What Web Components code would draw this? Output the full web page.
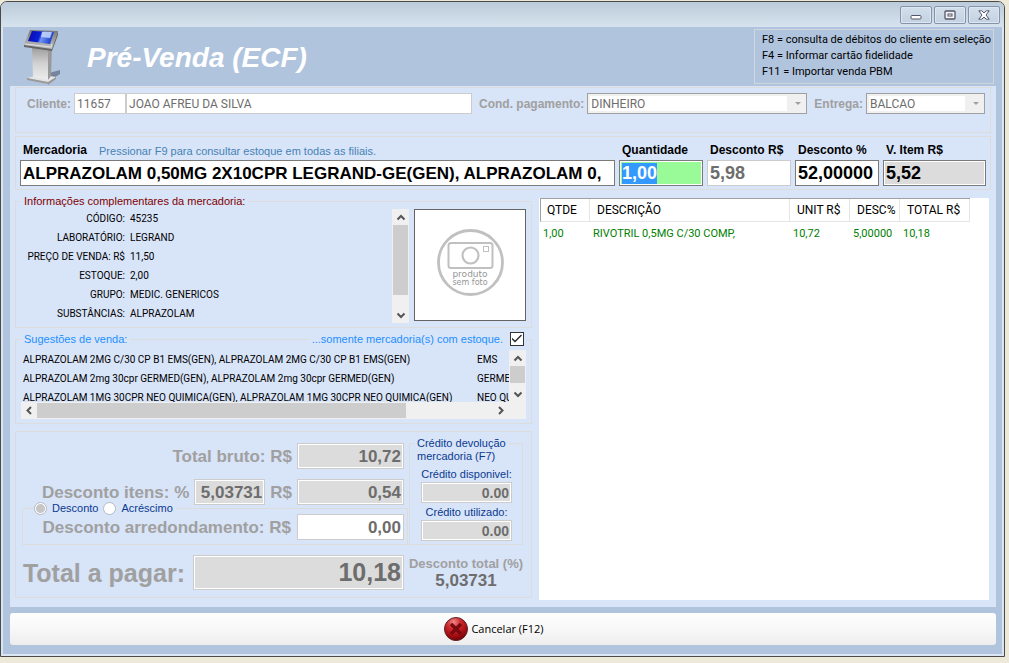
<!DOCTYPE html>
<html lang="pt-BR">
<head>
<meta charset="utf-8">
<title>Pré-Venda (ECF)</title>
<style>
  html, body { margin: 0; }
  body {
    box-sizing: border-box;
    min-height: 100vh;
    padding: 1px 4px 6px 0;
    display: flex;
    background: #ece9d8;
    color: #000;
    font: 11px/14px "Liberation Sans", Arial, sans-serif;
    --panel: #d8e4f8;
    --frame: #b0c4de;
    --line: #dcdcdc;
    --muted: #a0a0a0;
    --bold: "Liberation Sans", Arial, sans-serif;
  }
  pre-sale-app { flex: 1; }
</style>
</head>
<body>
<pre-sale-app></pre-sale-app>

<script>
const define = (name, html, setup) => {
  const template = document.createElement('template');
  template.innerHTML = html;
  customElements.define(name, class extends HTMLElement {
    constructor() {
      super();
      this.attachShadow({ mode: 'open' }).append(template.content.cloneNode(true));
    }
    connectedCallback() { if (setup) setup(this.shadowRoot, this); }
  });
};

/* Rules shared by the text boxes of every form */
const fieldCss = `
  * { box-sizing: border-box; }
  input[type=text] {
    display: block; min-width: 0; width: 100%; height: 26px; margin: 0; padding: 1px 2px 0;
    border: 1px solid #7a7a7a; border-radius: 0; outline: 0; background: #fff; color: #000;
    font: bold 17px var(--bold); box-shadow: inset 0 0 0 1px #fff;
  }
  input[type=text].off { border-color: #ccc; color: #6d6d6d; opacity: 1; }
  input[type=text].gray { background: #dcdcdc; }
  input[type=text].right { text-align: right; }
  fieldset { min-width: 0; margin: 0; border: 1px solid var(--line); }
  legend { padding: 0 3px; }
`;

define('window-frame', `
  <style>
    :host { display: flex; flex-direction: column; box-sizing: border-box; border: 1px solid #4a4a4a;
      border-radius: 7px 7px 0 0; padding: 0 2px 2px; background: #d9e5f1; overflow: hidden; }
    header { display: flex; justify-content: flex-end; align-items: center; gap: 2px; height: 25px;
      box-sizing: border-box; margin: 0 -2px; padding: 0 4px 0 0; background: linear-gradient(#bccbd9, #d6e3ef); }
    button { width: 32px; height: 18px; padding: 0; display: grid; place-items: center;
      border: 1px solid #8494ac; border-radius: 2px; background: linear-gradient(#d3dfeb, #c3d2e1);
      box-shadow: inset 0 0 0 1px #dce7f1; }
    .content { flex: 1; display: flex; flex-direction: column; background: var(--frame); padding: 0 6px 9px 7px; }
    svg { display: block; }
  </style>
  <header>
    <button type="button" aria-label="Minimizar"><svg width="12" height="10" viewBox="0 0 12 10"><rect x="1" y="5.500" width="10" height="3.500" rx="1" fill="#fff" stroke="#55556a"/></svg></button>
    <button type="button" aria-label="Maximizar"><svg width="12" height="10" viewBox="0 0 12 10"><rect x="1" y="1" width="10" height="8" rx="1" fill="#f2f2f2" stroke="#55556a" stroke-width="1.300"/><rect x="4" y="4" width="4" height="2" fill="#fff" stroke="#55556a"/></svg></button>
    <button type="button" aria-label="Fechar"><svg width="12" height="10" viewBox="0 0 12 10"><path d="M.8.8h3L6 3 8.200.8h3L8 5l3.200 4.200h-3L6 7 3.800 9.200h-3L4 5z" fill="#fff" stroke="#55556a" stroke-linejoin="round"/></svg></button>
  </header>
  <div class="content"><slot></slot></div>
`);

define('page-header', `
  <style>
    :host { display: flex; align-items: center; height: 59px; }
    svg { flex: none; margin: 0 26px 0 13px; }
    h1 { flex: 1; margin: 0; padding-top: 3px; color: #fff; font: italic bold 28px/34px var(--bold); white-space: nowrap; }
    ul { box-sizing: border-box; flex: 0 0 240px; min-width: 0; margin: 0 2px 0 0; padding: 2px 0 3px 7px; list-style: none;
      border: 1px solid #d0d6de; font-family: Roboto, sans-serif; line-height: 16px; white-space: nowrap; }
  </style>
  <svg width="38" height="57" viewBox="0 0 38 57" aria-hidden="true">
    <defs>
      <linearGradient id="post" x1="0" x2="0" y1="0" y2="1"><stop stop-color="#9b9b9b"/><stop offset=".5" stop-color="#d2d2d2"/><stop offset="1" stop-color="#eee"/></linearGradient>
      <linearGradient id="screen" x1="0" x2="1" y1="0" y2=".2"><stop stop-color="#1a0a90"/><stop offset=".3" stop-color="#0716c8"/><stop offset=".5" stop-color="#0a22d8"/><stop offset=".6" stop-color="#6f93f0"/><stop offset="1" stop-color="#1c40cf"/></linearGradient>
      <linearGradient id="bezel" x1="0" x2="0" y1="0" y2="1"><stop stop-color="#777"/><stop offset="1" stop-color="#c4c4c4"/></linearGradient>
    </defs>
    <path d="M26 45l11-3v4l-8 5z" fill="#5d6b80" opacity=".7"/>
    <path d="M4 50l8-2h15l6 1-8 7z" fill="#e4e4e4"/><path d="M4 50l21 4v2L4 52zM25 54l8-5v2l-8 6z" fill="#999"/>
    <path d="M9 19l19 2-1 31-17-3z" fill="url(#post)"/><path d="M25 21l4-2-1 29-3 4z" fill="#999"/>
    <path d="M7 2l28 1-6 18L1 17z" fill="url(#bezel)"/><path d="M1 17l28 4 6-18v4l-6 16L1 19z" fill="#666"/>
    <path d="M2 16l26 3 1-3" fill="none" stroke="#e0e0e0"/>
    <path d="M9 3l22 1-4 12L5 13z" fill="url(#screen)"/><path d="M19 4l10 0-2 6-9-1z" fill="#c5d6fa" opacity=".85"/>
  </svg>
  <h1>Pré-Venda (ECF)</h1>
  <ul>
    <li>F8 = consulta de débitos do cliente em seleção</li>
    <li>F4 = Informar cartão fidelidade</li>
    <li>F11 = Importar venda PBM</li>
  </ul>
`);

define('customer-form', `
  <style>${fieldCss}
    :host { display: block; box-sizing: border-box; height: 46px; padding: 5px 5px 0 11px; border: 1px solid var(--line); }
    form { display: grid; grid-template-columns: auto 52px minmax(0, 1fr) auto 220px auto 119px; align-items: center; }
    label { color: var(--muted); font: bold 12px/16px var(--bold); white-space: nowrap; padding: 1px 3px 0 7px; }
    label:first-child { padding: 1px 3px 0 0; }
    input[type=text] { height: 21px; font: 12px Roboto, sans-serif; }
    input + input { margin-left: -1px; }
    .combo { position: relative; }
    select { appearance: none; display: block; width: 100%; height: 21px; margin: 0; padding: 0 18px 0 3px;
      border: 1px solid #a0a0a0; border-radius: 0; opacity: 1; color: #6d6d6d; font: 12px Roboto, sans-serif;
      background: linear-gradient(90deg, #fff calc(100% - 19px), #f0f0f0 0); box-shadow: inset 0 0 0 2px #f0f0f0; }
    .combo svg { position: absolute; right: 6px; top: 9px; }
  </style>
  <form>
    <label for="code">Cliente:</label>
    <input id="code" class="off" type="text" value="11657" disabled>
    <input class="off" type="text" value="JOAO AFREU DA SILVA" aria-label="Nome do cliente" disabled>
    <label for="terms">Cond. pagamento:</label>
    <div class="combo"><select id="terms" disabled><option>DINHEIRO</option></select><svg width="6" height="3"><path d="M0 0h6L3 3z" fill="#a0a0a0"/></svg></div>
    <label for="delivery">Entrega:</label>
    <div class="combo"><select id="delivery" disabled><option>BALCAO</option></select><svg width="6" height="3"><path d="M0 0h6L3 3z" fill="#a0a0a0"/></svg></div>
  </form>
`);

define('item-form', `
  <style>${fieldCss}
    :host { display: block; border: 1px solid var(--line); padding: 5px 4px 3px; }
    form { display: grid; grid-template-columns: minmax(0, 1fr) 84px 84px 84px 103px; gap: 2px 4px; }
    .cap { height: 16px; padding-left: 3px; white-space: nowrap; font: bold 12px/16px var(--bold); }
    .first { display: flex; gap: 12px; }
    .hint { padding-top: 2px; color: #4682b4; font-weight: 400; font-size: 11px; line-height: 14px; }
    input[type=text].num { font-size: 18px; }
    #qty { background: #98fb98; }
    #qty::selection { background: #3399ff; color: #fff; }
  </style>
  <form>
    <div class="cap first"><label for="item">Mercadoria</label><span class="hint">Pressionar F9 para consultar estoque em todas as filiais.</span></div>
    <label class="cap" for="qty">Quantidade</label>
    <label class="cap" for="off">Desconto R$</label>
    <label class="cap" for="pct">Desconto %</label>
    <label class="cap" for="unit">V. Item R$</label>
    <input id="item" type="text" value="ALPRAZOLAM 0,50MG 2X10CPR LEGRAND-GE(GEN), ALPRAZOLAM 0,">
    <input id="qty" class="num" type="text" value="1,00">
    <input id="off" class="num off" type="text" value="5,98" disabled>
    <input id="pct" class="num" type="text" value="52,00000">
    <input id="unit" class="num gray" type="text" value="5,52" readonly>
  </form>
`, root => {
  const qty = root.getElementById('qty');
  qty.focus();
  qty.select();
});

/* Classic scroll bar: size of the thumb and of the space after it come from the host's properties */
define('scroll-strip', `
  <style>
    :host { display: flex; flex-direction: column; width: 17px; background: #f0f0f0; }
    :host([horizontal]) { flex-direction: row; width: auto; height: 17px; }
    button { flex: 0 0 16px; min-width: 16px; min-height: 16px; padding: 0; border: 0; background: none; display: grid; place-items: center; }
    .thumb { flex: var(--thumb, 1); margin: 0 1px; background: #cdcdcd; }
    .rest { flex: var(--rest, 0); }
    :host([horizontal]) .thumb { margin: 1px 0; }
    :host([horizontal]) svg { transform: rotate(-90deg); }
    svg { display: block; }
  </style>
  <button type="button" aria-label="Anterior"><svg width="10" height="7"><path d="M1.500 5.500L5 2l3.500 3.500" fill="none" stroke="#555" stroke-width="2"/></svg></button>
  <div class="thumb"></div><div class="rest"></div>
  <button type="button" aria-label="Próximo"><svg width="10" height="7"><path d="M1.500 1.500L5 5l3.500-3.500" fill="none" stroke="#555" stroke-width="2"/></svg></button>
`);

define('product-photo', `
  <style>
    :host { display: block; box-sizing: border-box; width: 112px; height: 112px; border: 1px solid #646464; background: #fff; }
    svg { display: block; }
  </style>
  <svg width="110" height="110" viewBox="0 0 110 110" role="img" aria-label="produto sem foto">
    <g fill="none" stroke="#c0c0c0">
      <circle cx="55.500" cy="52.500" r="32" stroke-width="2.800"/>
      <rect x="33.500" y="33" width="44" height="25" rx="2.500" stroke-width="2"/>
      <circle cx="55.500" cy="45.500" r="8" stroke-width="2.200"/>
      <rect x="68.500" y="36.500" width="5" height="5"/>
    </g>
    <g fill="#959595" text-anchor="middle" font-family="DejaVu Sans, sans-serif">
      <text x="55" y="67" font-size="9">produto</text>
      <text x="55" y="75" font-size="8">sem foto</text>
    </g>
  </svg>
`);

define('product-info', `
  <style>${fieldCss}
    :host { display: block; }
    fieldset { padding: 1px 5px 4px 4px; }
    legend { color: #800000; margin-left: 1px; }
    .row { display: flex; gap: 5px; }
    dl { flex: 1; min-width: 0; display: grid; grid-template-columns: 105px 1fr; grid-auto-rows: 19px; column-gap: 5px;
      margin: 0; font: 10px/19px Roboto, sans-serif; white-space: nowrap; }
    dt { text-align: right; } dd { margin: 0; }
    scroll-strip { --thumb: 71; --rest: 12; }
  </style>
  <fieldset>
    <legend>Informações complementares da mercadoria:</legend>
    <div class="row">
      <dl>
        <dt>CÓDIGO:</dt><dd>45235</dd>
        <dt>LABORATÓRIO:</dt><dd>LEGRAND</dd>
        <dt>PREÇO DE VENDA: R$</dt><dd>11,50</dd>
        <dt>ESTOQUE:</dt><dd>2,00</dd>
        <dt>GRUPO:</dt><dd>MEDIC. GENERICOS</dd>
        <dt>SUBSTÂNCIAS:</dt><dd>ALPRAZOLAM</dd>
      </dl>
      <scroll-strip></scroll-strip>
      <product-photo></product-photo>
    </div>
  </fieldset>
`);

define('sale-suggestions', `
  <style>${fieldCss}
    :host { display: block; color: #1e90ff; }
    fieldset { padding: 4px 5px 4px; }
    legend { width: 100%; display: flex; align-items: center; padding: 0 2px 0 3px; }
    legend i { flex: 1; height: 1px; margin: 0 3px; background: var(--line); }
    input { appearance: none; width: 14px; height: 14px; margin: 0 0 0 7px; border: 1px solid #333; background: #fff; }
    legend div { display: grid; }
    legend div > * { grid-area: 1 / 1; }
    legend svg { margin: 2px 0 0 9px; pointer-events: none; z-index: 1; }
    .view { display: flex; height: 52px; color: #000; }
    table { border-collapse: collapse; table-layout: fixed; width: 100%; font: 10px/19px Roboto, sans-serif; white-space: nowrap; }
    td { padding: 0 0 0 2px; overflow: hidden; }
    td + td { width: 32px; padding: 0; }
    .clip { flex: 1; min-width: 0; overflow: hidden; }
    .view scroll-strip { --thumb: 17; --rest: 3; }
    .foot { display: flex; }
    .foot scroll-strip { flex: 1; --thumb: 368; --rest: 87; }
    .foot span { width: 17px; background: #f0f0f0; }
  </style>
  <fieldset>
    <legend>
      <span>Sugestões de venda:</span><i></i>
      <label for="stock">...somente mercadoria(s) com estoque.</label>
      <div><input id="stock" type="checkbox" checked><svg width="10" height="9"><path d="M0 4.500L3 7.500 9.500 1" fill="none" stroke="#222" stroke-width="1.300"/></svg></div>
    </legend>
    <div class="view">
      <div class="clip"><table>
        <tr><td>ALPRAZOLAM 2MG C/30 CP B1 EMS(GEN), ALPRAZOLAM 2MG C/30 CP B1 EMS(GEN)</td><td>EMS</td></tr>
        <tr><td>ALPRAZOLAM 2mg 30cpr GERMED(GEN), ALPRAZOLAM 2mg 30cpr GERMED(GEN)</td><td>GERMED</td></tr>
        <tr><td>ALPRAZOLAM 1MG 30CPR NEO QUIMICA(GEN), ALPRAZOLAM 1MG 30CPR NEO QUIMICA(GEN)</td><td>NEO QUIMICA</td></tr>
      </table></div>
      <scroll-strip></scroll-strip>
    </div>
    <div class="foot"><scroll-strip horizontal></scroll-strip><span></span></div>
  </fieldset>
`);

define('sale-totals', `
  <style>${fieldCss}
    :host { display: grid; grid-template-columns: minmax(0, 1fr) 114px; box-sizing: border-box;
      border: 1px solid var(--line); padding: 5px 8px 7px 6px; }
    .line { display: flex; justify-content: flex-end; align-items: center; gap: 5px; margin-right: 5px;
      color: var(--muted); font: bold 17px/20px var(--bold); white-space: nowrap; }
    .line label { padding-top: 1px; }
    .line input[type=text] { width: 107px; }
    .line #items { width: 71px; }
    .sums { padding-top: 6px; display: flex; flex-direction: column; gap: 10px; }
    .round { margin: -13px 1px 0 0; padding: 0 3px 4px; }
    .round .line { margin: 0; gap: 6px; }
    .round legend { height: 12px; display: flex; align-items: center; gap: 5px; margin-left: 8px; padding: 0 3px 0 0; line-height: 12px; color: #0a3a90; }
    input[type=radio] { appearance: none; width: 13px; height: 13px; margin: 0; border: 1px solid #b5bac5; border-radius: 50%; background: #fff; }
    input[type=radio]:checked { background: radial-gradient(#c6c6c6 4px, #fff 5px); }
    .credit { padding: 18px 10px 3px 11px; color: #0a3a90; line-height: 12px; text-align: center; }
    .credit legend { height: 13px; line-height: 13px; margin-left: -7px; white-space: nowrap; text-align: left; }
    .credit label { display: block; margin-bottom: 2px; }
    .credit input[type=text] { height: 21px; margin-bottom: 3px; font-size: 14px; }
    .credit input:last-child { margin-bottom: 0; }
    .due { margin-top: 10px; font-size: 25px; line-height: 28px; gap: 8px; }
    .due label { padding: 0; }
    .due input[type=text] { width: 211px; height: 35px; padding-top: 0; font-size: 25px; }
    .rate { margin: 10px -4px 0; text-align: center; color: var(--muted); font: bold 13px/17px var(--bold); white-space: nowrap; }
    .rate output { display: block; color: #6d6d6d; font-size: 17px; line-height: 18px; }
  </style>
  <div class="sums">
    <div class="line"><label for="gross">Total bruto: R$</label><input id="gross" class="off gray right" type="text" value="10,72" disabled></div>
    <div class="line"><label for="items">Desconto itens: %</label><input id="items" class="off gray right" type="text" value="5,03731" disabled>
      <label for="itemsValue">R$</label><input id="itemsValue" class="off gray right" type="text" value="0,54" disabled></div>
    <fieldset class="round">
      <legend><input id="down" name="kind" type="radio" checked><label for="down">Desconto</label><input id="up" name="kind" type="radio"><label for="up">Acréscimo</label></legend>
      <div class="line"><label for="rounding">Desconto arredondamento: R$</label><input id="rounding" class="off right" type="text" value="0,00" disabled></div>
    </fieldset>
  </div>
  <fieldset class="credit">
    <legend>Crédito devolução<br>mercadoria (F7)</legend>
    <label for="free">Crédito disponivel:</label><input id="free" class="off gray right" type="text" value="0.00" disabled>
    <label for="used">Crédito utilizado:</label><input id="used" class="off gray right" type="text" value="0.00" disabled>
  </fieldset>
  <div class="line due"><label for="due">Total a pagar:</label><input id="due" class="off gray right" type="text" value="10,18" disabled></div>
  <div class="rate">Desconto total (%)<output>5,03731</output></div>
`);

define('sale-items', `
  <style>
    :host { display: block; background: #fff; padding: 1px 0 0 1px; overflow: hidden; font-family: Roboto, sans-serif; }
    table { width: 430px; table-layout: fixed; border-spacing: 0; line-height: 22px; white-space: nowrap; }
    th { padding: 0 0 0 7px; font-size: 12px; font-weight: 400; text-align: left; border: solid #e5e5e5; border-width: 0 1px 1px 0; box-shadow: 0 -1px #a0a0a0; }
    th:first-child { border-left: 1px solid #a0a0a0; padding-left: 6px; }
    td { padding: 1px 0 0 3px; color: #008000; }
  </style>
  <table>
    <colgroup><col style="width:50px"><col style="width:200px"><col style="width:60px"><col style="width:50px"><col></colgroup>
    <thead><tr><th>QTDE</th><th>DESCRIÇÃO</th><th>UNIT R$</th><th>DESC%</th><th>TOTAL R$</th></tr></thead>
    <tbody><tr><td>1,00</td><td>RIVOTRIL 0,5MG C/30 COMP,</td><td>10,72</td><td>5,00000</td><td>10,18</td></tr></tbody>
  </table>
`);

define('cancel-bar', `
  <style>
    :host { display: block; margin-top: 6px; }
    button { width: 100%; height: 32px; padding: 0 18px 0 0; display: flex; align-items: center; justify-content: center; gap: 3px;
      border: 0; border-radius: 3px; background: linear-gradient(#fefefe, #f6f6f6 60%, #ededed); color: #000;
      font: 11px/16px "Open Sans", sans-serif; }
  </style>
  <button type="button">
    <svg width="24" height="24" viewBox="0 0 24 24" aria-hidden="true">
      <defs><radialGradient id="ball" cx=".4" cy=".2" r=".85"><stop stop-color="#ee8a8a"/><stop offset=".35" stop-color="#cf2a2e"/><stop offset=".75" stop-color="#9e0a10"/><stop offset="1" stop-color="#5c0206"/></radialGradient></defs>
      <circle cx="12" cy="12" r="11.500" fill="url(#ball)" stroke="#5e2226"/>
      <path d="M7 7l10 10M17 7L7 17" stroke="#7a0a10" stroke-width="3.500"/>
    </svg>
    <span>Cancelar (F12)</span>
  </button>
`);

define('pre-sale-app', `
  <style>
    :host { display: flex; min-width: 0; }
    window-frame { flex: 1; min-width: 0; }
    main { flex: 1; padding: 1px 5px 7px; background: var(--panel); display: flex; flex-direction: column; }
    item-form { margin-top: 3px; }
    .columns { flex: 1; display: grid; grid-template-columns: minmax(0, 517fr) minmax(0, 450fr); gap: 7px; padding: 4px 2px 0 0; }
    .left { display: flex; flex-direction: column; }
    sale-suggestions { margin: 4px 0 7px; }
    sale-items { margin-top: 4px; }
  </style>
  <window-frame>
    <page-header></page-header>
    <main>
      <customer-form></customer-form>
      <item-form></item-form>
      <div class="columns">
        <div class="left">
          <product-info></product-info>
          <sale-suggestions></sale-suggestions>
          <sale-totals></sale-totals>
        </div>
        <sale-items></sale-items>
      </div>
    </main>
    <cancel-bar></cancel-bar>
  </window-frame>
`);
</script>
</body>
</html>
